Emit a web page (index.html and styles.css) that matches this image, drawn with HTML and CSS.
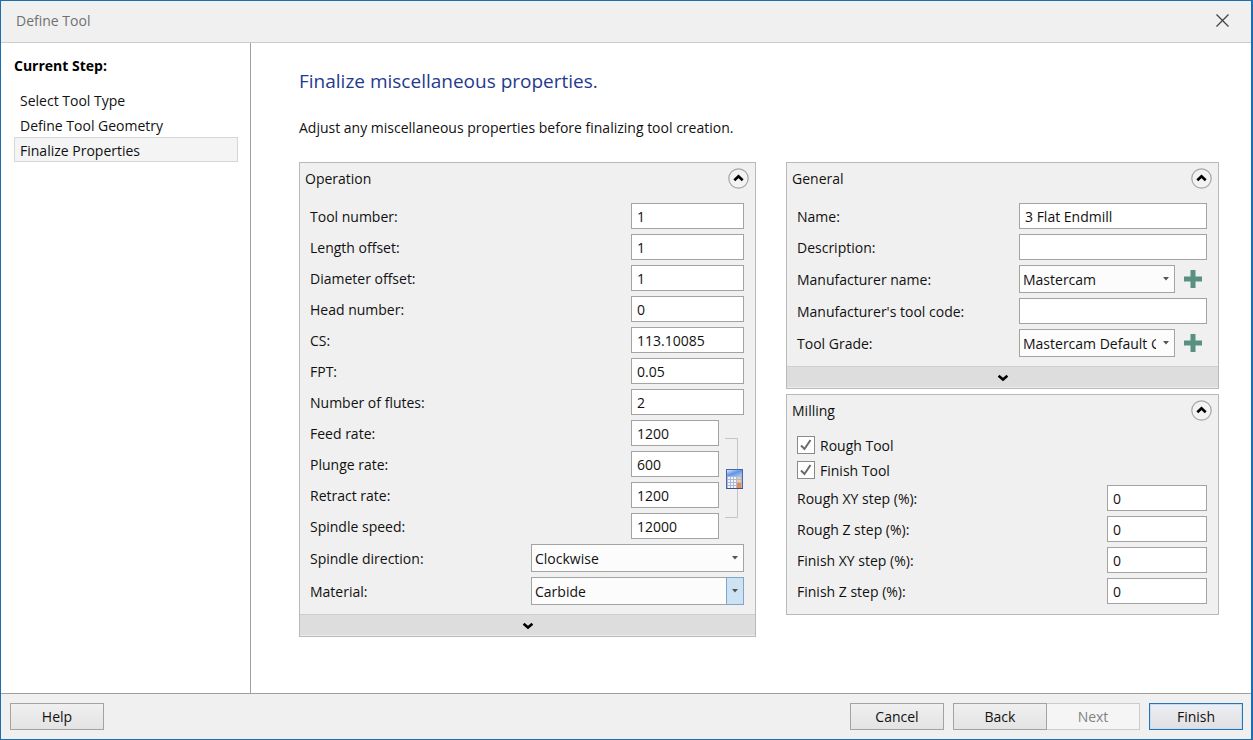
FILE: index.html
```html
<!DOCTYPE html>
<html lang="en">
<head>
<meta charset="utf-8">
<title>Define Tool</title>
<link rel="stylesheet" href="styles.css">
</head>
<body>
<svg class="defs" aria-hidden="true">
  <symbol id="up" viewBox="0 0 21 21"><circle cx="10.500" cy="10.500" r="9.700" fill="#f3f3f3" stroke="#a6a6a6" stroke-width="1.200"/><path d="M6.300 12.300 10.500 8.300l4.200 4" fill="none" stroke="#000" stroke-width="2.600"/></symbol>
  <symbol id="down" viewBox="0 0 12 8"><path d="M1.600 1.800 6 5.600l4.400-3.800" fill="none" stroke="#000" stroke-width="2.600"/></symbol>
  <symbol id="arrow" viewBox="0 0 6 4"><path d="M0 0h6L3 3.500z" fill="#555"/></symbol>
  <symbol id="plus" viewBox="0 0 18 18"><path d="M6.500 0h5v6.500H18v5h-6.500V18h-5v-6.500H0v-5h6.500z" fill="#58917f"/></symbol>
</svg>
<div class="window">
  <header class="titlebar">
    <span>Define Tool</span>
    <button class="close" type="button" aria-label="Close"><svg width="13" height="13" viewBox="0 0 13 13"><path d="M.5.500l12 12M12.500.500l-12 12" stroke="#444" stroke-width="1.300"/></svg></button>
  </header>
  <div class="middle">
    <nav class="steps">
      <h2>Current Step:</h2>
      <ol>
        <li>Select Tool Type</li>
        <li>Define Tool Geometry</li>
        <li class="current">Finalize Properties</li>
      </ol>
    </nav>
    <main class="content">
      <h1>Finalize miscellaneous properties.</h1>
      <p>Adjust any miscellaneous properties before finalizing tool creation.</p>
      <div class="columns">
        <section class="panel">
          <div class="panel-head"><h3>Operation</h3><button class="round" type="button" aria-label="Collapse Operation"><svg><use href="#up"/></svg></button></div>
          <div class="rows">
            <div class="row"><label for="num">Tool number:</label><input class="field mid" id="num" value="1"></div>
            <div class="row"><label for="len">Length offset:</label><input class="field mid" id="len" value="1"></div>
            <div class="row"><label for="dia">Diameter offset:</label><input class="field mid" id="dia" value="1"></div>
            <div class="row"><label for="head">Head number:</label><input class="field mid" id="head" value="0"></div>
            <div class="row"><label for="cs">CS:</label><input class="field mid" id="cs" value="113.10085"></div>
            <div class="row"><label for="fpt">FPT:</label><input class="field mid" id="fpt" value="0.05"></div>
            <div class="row"><label for="flutes">Number of flutes:</label><input class="field mid" id="flutes" value="2"></div>
            <div class="linked">
              <div class="linked-rows">
                <div class="row"><label for="feed">Feed rate:</label><input class="field short" id="feed" value="1200"></div>
                <div class="row"><label for="plunge">Plunge rate:</label><input class="field short" id="plunge" value="600"></div>
                <div class="row"><label for="retract">Retract rate:</label><input class="field short" id="retract" value="1200"></div>
                <div class="row"><label for="speed">Spindle speed:</label><input class="field short" id="speed" value="12000"></div>
              </div>
              <button class="calc" type="button" aria-label="Calculate">
                <svg width="25" height="119" viewBox="0 0 25 119">
                  <defs><linearGradient id="lcd" x1="0" y1="0" x2="1" y2="1"><stop offset="0" stop-color="#d8eaff"/><stop offset=".5" stop-color="#5f95e2"/><stop offset="1" stop-color="#a9cdf8"/></linearGradient></defs>
                  <path d="M6 18.500h12.500v79H6" fill="none" stroke="#c4c4c4"/>
                  <rect x="7.500" y="49.500" width="16" height="19" fill="#a9b9d6" stroke="#4a66a8"/>
                  <rect x="8" y="50" width="15" height="6" fill="url(#lcd)"/>
                  <g fill="#f3f5f8"><path d="M9 57h2v2H9zM12 57h2v2h-2zM15 57h2v2h-2zM9 60h2v2H9zM12 60h2v2h-2zM15 60h2v2h-2zM9 63h2v2H9zM12 63h2v2h-2zM15 63h2v2h-2zM9 66h2v2H9zM12 66h2v2h-2zM15 66h2v2h-2z"/></g>
                  <path d="M18 57h4v2h-4zM18 60h4v2h-4z" fill="#f4c9a5"/>
                  <path d="M18 63h4v5h-4z" fill="#e88b4c"/>
                  <path d="M8 68.500h16" stroke="#3f4f80"/>
                </svg>
              </button>
            </div>
            <div class="row"><label for="dir">Spindle direction:</label><span class="combo wide"><select id="dir"><option>Clockwise</option></select><svg class="arrow"><use href="#arrow"/></svg></span></div>
            <div class="row"><label for="mat">Material:</label><span class="combo wide active"><select id="mat"><option>Carbide</option></select><svg class="arrow"><use href="#arrow"/></svg></span></div>
          </div>
          <button class="more" type="button" aria-label="More operation properties"><svg><use href="#down"/></svg></button>
        </section>
        <div class="stack">
          <section class="panel">
            <div class="panel-head"><h3>General</h3><button class="round" type="button" aria-label="Collapse General"><svg><use href="#up"/></svg></button></div>
            <div class="rows">
              <div class="row"><label for="name">Name:</label><input class="field long" id="name" value="3 Flat Endmill"></div>
              <div class="row"><label for="desc">Description:</label><input class="field long" id="desc"></div>
              <div class="row"><label for="maker">Manufacturer name:</label><span class="combo maker"><select id="maker"><option>Mastercam</option></select><svg class="arrow"><use href="#arrow"/></svg></span><button class="add" type="button" aria-label="Add manufacturer"><svg><use href="#plus"/></svg></button></div>
              <div class="row"><label for="code">Manufacturer's tool code:</label><input class="field long" id="code"></div>
              <div class="row"><label for="grade">Tool Grade:</label><span class="combo maker"><select id="grade"><option>Mastercam Default Grade</option></select><svg class="arrow"><use href="#arrow"/></svg></span><button class="add" type="button" aria-label="Add tool grade"><svg><use href="#plus"/></svg></button></div>
            </div>
            <button class="more" type="button" aria-label="More general properties"><svg><use href="#down"/></svg></button>
          </section>
          <section class="panel">
            <div class="panel-head"><h3>Milling</h3><button class="round" type="button" aria-label="Collapse Milling"><svg><use href="#up"/></svg></button></div>
            <div class="rows last">
              <label class="check"><input type="checkbox" checked><svg viewBox="0 0 18 18"><path d="M4 9.500 7.500 13 13.500 4" /></svg><span>Rough Tool</span></label>
              <label class="check"><input type="checkbox" checked><svg viewBox="0 0 18 18"><path d="M4 9.500 7.500 13 13.500 4" /></svg><span>Finish Tool</span></label>
              <div class="row"><label for="rxy">Rough XY step (%):</label><input class="field pct" id="rxy" value="0"></div>
              <div class="row"><label for="rz">Rough Z step (%):</label><input class="field pct" id="rz" value="0"></div>
              <div class="row"><label for="fxy">Finish XY step (%):</label><input class="field pct" id="fxy" value="0"></div>
              <div class="row"><label for="fz">Finish Z step (%):</label><input class="field pct" id="fz" value="0"></div>
            </div>
          </section>
        </div>
      </div>
    </main>
  </div>
  <footer class="footer">
    <button class="btn help" type="button">Help</button>
    <button class="btn" type="button">Cancel</button>
    <div class="pair"><button class="btn" type="button">Back</button><button class="btn" type="button" disabled>Next</button></div>
    <button class="btn primary" type="button">Finish</button>
  </footer>
</div>
</body>
</html>
```
FILE: styles.css
```css
*, *::before { box-sizing: border-box; }
body, h1, h2, h3, p, ol { margin: 0; padding: 0; }
body, button, input, select {
  font-family: "Open Sans", "Noto Sans", sans-serif;
  font-size: 14px;
  line-height: 20px;
  color: #111;
}
button { padding: 0; border: 0; background: none; }
svg { display: block; }
.defs { position: absolute; width: 0; height: 0; }

.window {
  display: flex;
  flex-direction: column;
  min-height: 100vh;
  border: 1px solid #1a6fb0;
  border-right-width: 2px;
  background: #fff;
}
.titlebar {
  display: flex;
  align-items: center;
  justify-content: space-between;
  height: 42px;
  padding: 0 20px 2px 15px;
  border-bottom: 1px solid #ccc;
  background: #f0f0f0;
  color: #707070;
}
.close { padding: 2px; }

.middle { display: flex; flex: 1; }
.steps {
  flex: none;
  width: 250px;
  padding: 13px 12px 0 13px;
  border-right: 1px solid #a0a0a0;
}
.steps h2 { margin-bottom: 11px; font-size: 14px; line-height: 20px; color: #000; }
.steps ol { list-style: none; }
.steps li { height: 25px; padding: 2px 5px 0; border: 1px solid transparent; line-height: 22px; }
.steps .current { border-color: #d6d6d6; background: #f4f4f4; }

.content { flex: 1; padding: 24px 32px 24px 48px; }
.content h1 { font-size: 19px; line-height: 28px; font-weight: 400; color: #1f3a8f; }
.content p { margin: 23px 0 24px; }
.columns {
  display: grid;
  grid-template-columns: 457fr 433fr;
  gap: 30px;
  align-items: start;
}
.stack { display: grid; gap: 5px; }

.panel { min-width: 0; border: 1px solid #b9b9b9; background: #f0f0f0; }
.panel-head {
  display: flex;
  align-items: center;
  justify-content: space-between;
  height: 30px;
  padding: 0 6px 0 5px;
}
.panel-head h3 { padding-top: 2px; font-size: 14px; font-weight: 400; }
.round svg { width: 21px; height: 21px; }
.rows { display: flex; flex-direction: column; gap: 5px; padding: 10px 11px 9px 10px; }
.last { padding-bottom: 10px; }
.row { display: flex; align-items: center; }
.row label { flex: 1; padding-top: 2px; white-space: nowrap; }

.field { height: 26px; padding: 0 5px; border: 1px solid #a3a3a3; border-radius: 0; background: #fff; }
.mid { width: 113px; }
.short { width: 88px; }
.long { width: 188px; }
.pct { width: 100px; }

.linked { display: flex; }
.linked-rows { display: flex; flex: 1; flex-direction: column; gap: 5px; }

.combo { position: relative; height: 28px; }
.combo select {
  width: 100%;
  height: 28px;
  padding: 2px 18px 0 3px;
  border: 1px solid #a3a3a3;
  border-radius: 0;
  background: #fcfcfc;
  appearance: none;
}
.arrow { position: absolute; top: 12px; right: 6px; width: 6px; height: 4px; pointer-events: none; }
.wide { width: 213px; }
.maker { width: 156px; }
.active::before {
  content: "";
  position: absolute;
  top: 0;
  right: 0;
  width: 18px;
  height: 28px;
  border: 1px solid #7fa6c6;
  background: #cde2f2;
  pointer-events: none;
}
.add { display: flex; justify-content: center; width: 28px; margin-left: 4px; }
.add svg { width: 18px; height: 18px; }

.more {
  display: flex;
  align-items: center;
  justify-content: center;
  width: 100%;
  height: 22px;
  padding-top: 2px;
  border-top: 1px solid #cfcfcf;
  border-bottom: 1px solid #eee;
  background: #ddd;
}
.more svg { width: 12px; height: 8px; }

.check { position: relative; display: flex; align-items: center; gap: 5px; height: 20px; }
.check input {
  width: 18px;
  height: 18px;
  margin: 0;
  border: 1px solid #8a8a8a;
  background: #fff;
  appearance: none;
}
.check span { padding-top: 2px; }
.check svg { position: absolute; top: 1px; left: 0; width: 18px; height: 18px; pointer-events: none; }
.check path { fill: none; stroke: #6a6a6a; stroke-width: 2; }

.footer {
  display: flex;
  gap: 9px;
  padding: 9px 8px 9px 9px;
  border-top: 1px solid #a0a0a0;
  background: #f0f0f0;
}
.btn {
  width: 94px;
  height: 27px;
  border: 1px solid #a3a3a3;
  background: linear-gradient(#f0f0f0, #e3e3e3);
}
.help { margin-right: auto; }
.pair { display: flex; }
.btn:disabled { width: 93px; border-color: #ccc; border-left: 0; background: #f5f5f5; color: #838383; }
.primary {
  border-color: #2673b5;
  background: linear-gradient(#eceff4, #e0e0e2);
  box-shadow: inset 0 0 0 1px #c4def2;
}
```
